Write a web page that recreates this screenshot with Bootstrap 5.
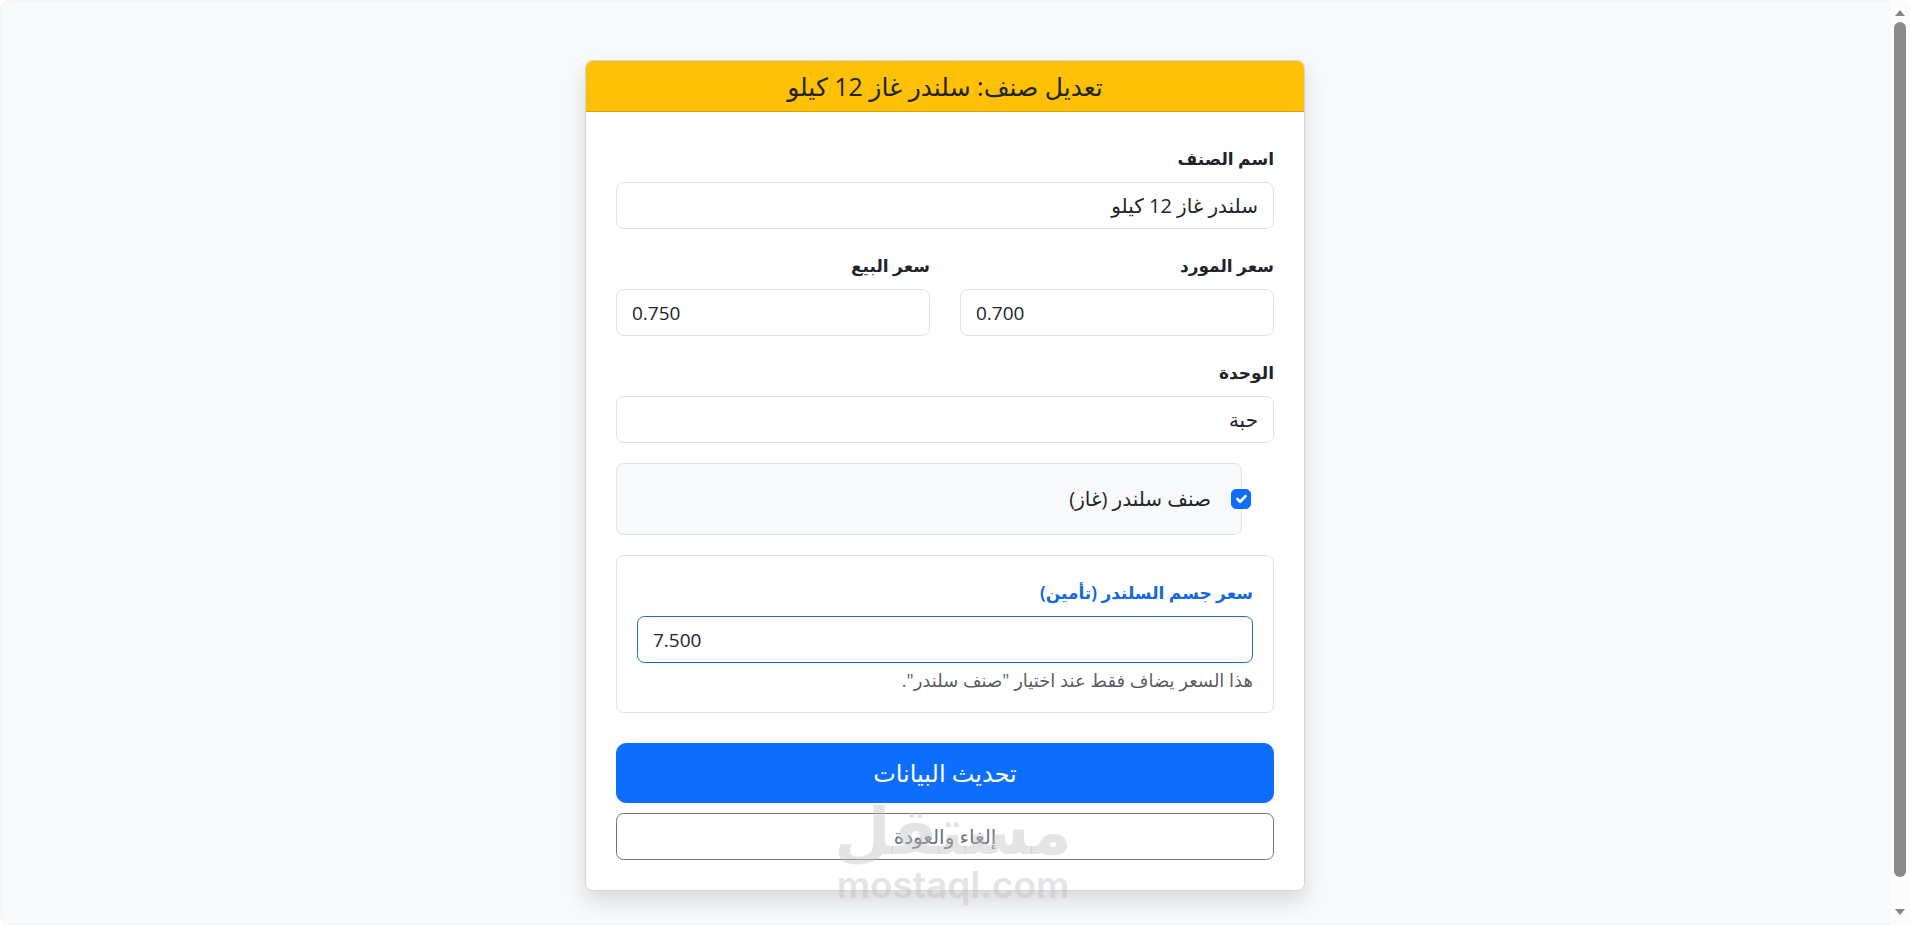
<!DOCTYPE html>
<html lang="ar" dir="rtl">
<head>
<meta charset="utf-8">
<meta name="viewport" content="width=device-width, initial-scale=1">
<title>تعديل صنف</title>
<link href="https://cdn.jsdelivr.net/npm/bootstrap@5.3.0/dist/css/bootstrap.min.css" rel="stylesheet">
<style>
  html { font-size: 20px; background: #fff; }
  body { font-family: "Open Sans", "DejaVu Sans", sans-serif; background: #fff; color: #212529; }
  .page-shell { background: #f8f9fb; box-shadow: inset 0 0 0 1px #f3f4f5; border-radius: 10px; overflow: hidden; }
  .form-wrap { max-width: 750px; }
  .item-card { --bs-card-border-color: #d3d5d7; }
  .item-card .card-header { background: #ffc107; border-color: #d6a206; }
  .card-title-text { font-size: 25px; line-height: 30px; font-weight: 500; }
  .form-label { font-size: 17px; line-height: 30px; padding-top: 2px; margin-bottom: 8px; }
  .form-control, .btn, .form-check-label { font-size: 20px; line-height: 30px; }
  .form-control { padding-top: 8px; padding-bottom: 7px; border-color: #dee2e6; color: #212529; }
  .form-label.text-primary { color: #1468de !important; }
  .form-control.border-primary { border-color: #1f6bd0 !important; }
  .num-field { direction: ltr; text-align: left; font-size: 19px; }
  .cyl-check { margin-right: 32px; padding: 20px; min-height: 0; }
  .cyl-check .form-check-input { float: none; flex: none; margin: 5px -30px 0 0; width: 20px; height: 20px; }
  .form-text { font-size: 18px; line-height: 24px; }
  .btn-save { font-size: 24px; line-height: 38px; }
  .scroll-rail { width: 20px; padding: 10px 0; background: #fcfcfc; }
  .scroll-thumb { width: 12px; margin: 6px 0 32px; background: #8b8b8b; border-radius: 6px; }
  .watermark { position: absolute; left: 50%; top: 794px; transform: translateX(-50%); margin-left: 8px; color: rgba(190,190,190,.42); pointer-events: none; direction: ltr; text-align: center; font-weight: 700; }
  .wm-name { font-family: "DejaVu Sans", sans-serif; font-size: 65px; line-height: 76px; }
  .wm-site { font-family: "Inter", sans-serif; font-size: 37px; line-height: 30px; font-weight: 600; }
</style>
</head>
<body>
<div class="page-shell d-flex min-vh-100" dir="ltr">
  <main class="flex-grow-1 position-relative" dir="rtl">
    <div class="container form-wrap pt-5 pb-3">
      <div class="card item-card shadow">
        <div class="card-header text-center">
          <h1 class="card-title-text mb-0">تعديل صنف: سلندر غاز 12 كيلو</h1>
        </div>
        <div class="card-body p-4">
          <form>
            <div class="mb-3">
              <label class="form-label fw-bold d-block" for="itemName">اسم الصنف</label>
              <input class="form-control" id="itemName" type="text" value="سلندر غاز 12 كيلو">
            </div>
            <div class="row">
              <div class="col-6 mb-3">
                <label class="form-label fw-bold d-block" for="supplyPrice">سعر المورد</label>
                <input class="form-control num-field" id="supplyPrice" type="text" inputmode="decimal" value="0.700">
              </div>
              <div class="col-6 mb-3">
                <label class="form-label fw-bold d-block" for="salePrice">سعر البيع</label>
                <input class="form-control num-field" id="salePrice" type="text" inputmode="decimal" value="0.750">
              </div>
            </div>
            <div class="mb-3">
              <label class="form-label fw-bold d-block" for="unit">الوحدة</label>
              <input class="form-control" id="unit" type="text" value="حبة">
            </div>
            <div class="form-check cyl-check d-flex gap-3 mb-3 border rounded bg-light">
              <input class="form-check-input" type="checkbox" id="isCylinder" checked>
              <label class="form-check-label" for="isCylinder">صنف سلندر (غاز)</label>
            </div>
            <div class="border rounded p-3">
              <label class="form-label fw-bold text-primary d-block" for="bodyPrice">سعر جسم السلندر (تأمين)</label>
              <input class="form-control num-field border-primary" id="bodyPrice" type="text" inputmode="decimal" value="7.500">
              <div class="form-text">هذا السعر يضاف فقط عند اختيار "صنف سلندر".</div>
            </div>
            <div class="d-grid gap-2 mt-4">
              <button class="btn btn-primary btn-lg btn-save" type="submit">تحديث البيانات</button>
              <a class="btn btn-outline-secondary" href="#">إلغاء والعودة</a>
            </div>
          </form>
        </div>
      </div>
    </div>
    <div class="watermark">
      <div class="wm-name" dir="rtl">مستقل</div>
      <div class="wm-site">mostaql.com</div>
    </div>
  </main>
  <div class="scroll-rail d-flex flex-column align-items-center" aria-hidden="true">
    <svg width="10" height="6" viewBox="0 0 10 6"><path d="M5 0l5 6H0z" fill="#858585"/></svg>
    <div class="scroll-thumb flex-grow-1"></div>
    <svg width="10" height="6" viewBox="0 0 10 6"><path d="M0 0h10L5 6z" fill="#858585"/></svg>
  </div>
</div>
<script src="https://cdn.jsdelivr.net/npm/bootstrap@5.3.0/dist/js/bootstrap.bundle.min.js"></script>
</body>
</html>
